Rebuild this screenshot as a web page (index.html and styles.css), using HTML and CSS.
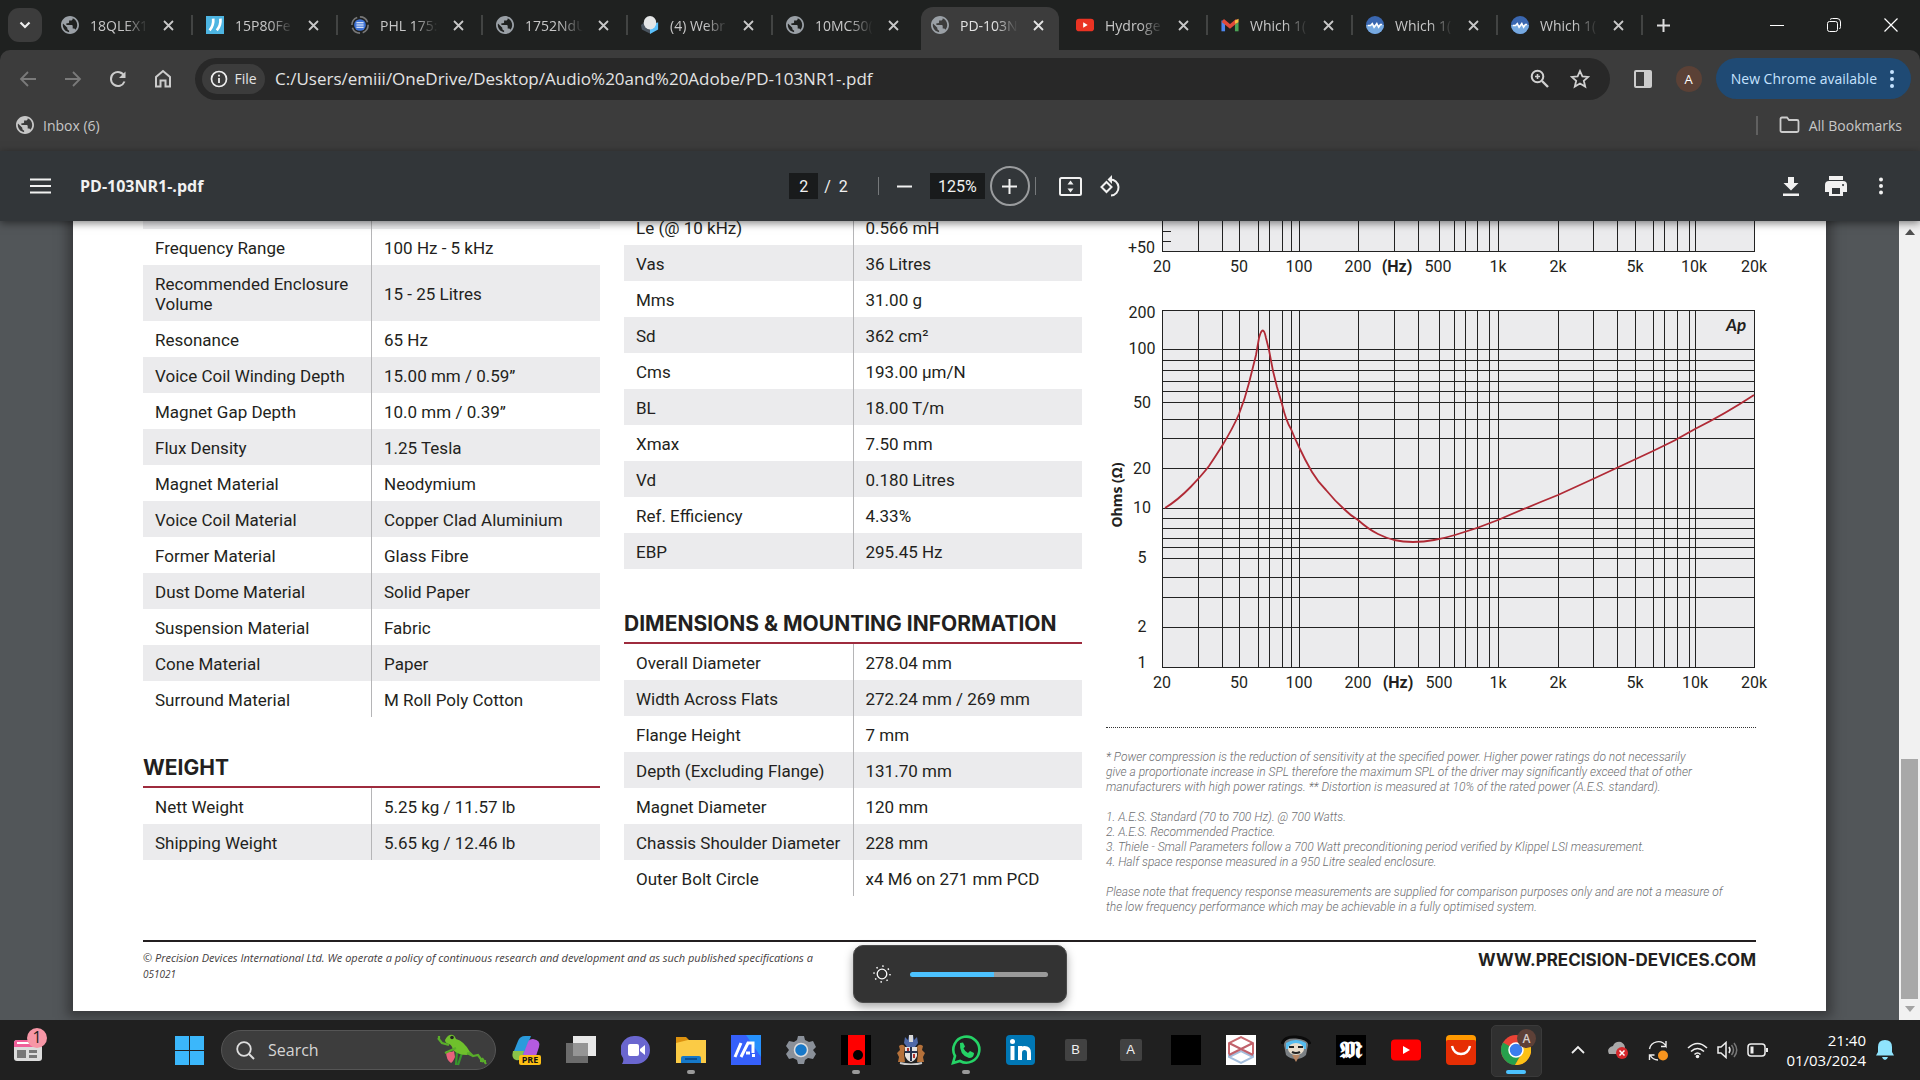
FILE: index.html
```html
<!DOCTYPE html>
<html lang="en">
<head>
<meta charset="utf-8">
<title>PD-103NR1-.pdf</title>
<link rel="stylesheet" href="styles.css">
</head>
<body>
<svg class="sprite" aria-hidden="true">
  <symbol id="globe" viewBox="2 2 20 20"><path d="M12 2C6.480 2 2 6.480 2 12s4.480 10 10 10 10-4.480 10-10S17.520 2 12 2zm-1 17.930c-3.950-.49-7-3.850-7-7.930 0-.62.08-1.210.21-1.790L9 15v1c0 1.100.9 2 2 2v1.930zm6.900-2.540c-.26-.81-1-1.390-1.900-1.390h-1v-3c0-.55-.45-1-1-1H8v-2h2c.55 0 1-.45 1-1V7h2c1.100 0 2-.9 2-2v-.41c2.930 1.190 5 4.060 5 7.410 0 2.080-.8 3.970-2.100 5.390z" fill="currentColor"/></symbol>
  <symbol id="cross" viewBox="0 0 11 11"><path d="M1 1l9 9M10 1l-9 9" stroke="currentColor" stroke-width="1.800" fill="none"/></symbol>
  <symbol id="wave" viewBox="0 0 20 20"><circle cx="10" cy="10" r="10" fill="#3a67b0"/><path d="M0 10a10 10 0 0 0 20 0z" fill="#76a9e0"/><path d="M2 10.500h3l2-2 2 4 3-4 2 4 2-3h2" stroke="#fff" stroke-width="1.800" fill="none"/></symbol>
</svg>

<header class="browser">
  <div class="tabstrip">
    <button class="tab-search" aria-label="Search tabs"><svg width="12" height="8" viewBox="0 0 12 8"><path d="M1.500 1.500 6 6l4.500-4.500" stroke="#eee" stroke-width="2.200" fill="none"/></svg></button>
    <ul class="tabs">
      <li class="tab"><svg class="fav"><use href="#globe"/></svg><span>18QLEX1</span><button aria-label="Close tab"><svg><use href="#cross"/></svg></button></li>
      <li class="tab"><svg class="fav" viewBox="0 0 20 20"><path d="M0 0h20v20H0z" fill="#4db5e2"/><path d="M8 3c.5 5-.5 9-4 13M16 3c.5 5-.5 9-4 13" stroke="#fff" stroke-width="3" fill="none"/></svg><span>15P80Fe</span><button aria-label="Close tab"><svg><use href="#cross"/></svg></button></li>
      <li class="tab"><svg class="fav" viewBox="0 0 20 20"><circle cx="10" cy="10" r="9" stroke="#777" stroke-width="1.800" stroke-dasharray="11 3" fill="none"/><circle cx="10" cy="10" r="6.500" fill="#3f74d8"/><path d="M6 7.500h8M6 10h8M6 12.500h8" stroke="#fff" stroke-width="1.300"/></svg><span>PHL 175:</span><button aria-label="Close tab"><svg><use href="#cross"/></svg></button></li>
      <li class="tab"><svg class="fav"><use href="#globe"/></svg><span>1752NdU</span><button aria-label="Close tab"><svg><use href="#cross"/></svg></button></li>
      <li class="tab"><svg class="fav" viewBox="0 0 20 20"><path d="M0 10 5 6l6 5v9L1 15z" fill="#4a5560"/><path d="m10 11 9-4v8l-9 5z" fill="#5bc0fb"/><ellipse cx="10" cy="7.500" rx="7" ry="7.500" fill="#e4e6e7"/></svg><span>(4) Webr</span><button aria-label="Close tab"><svg><use href="#cross"/></svg></button></li>
      <li class="tab"><svg class="fav"><use href="#globe"/></svg><span>10MC50(</span><button aria-label="Close tab"><svg><use href="#cross"/></svg></button></li>
      <li class="tab active"><svg class="fav"><use href="#globe"/></svg><span>PD-103N</span><button aria-label="Close tab"><svg><use href="#cross"/></svg></button></li>
      <li class="tab"><svg class="fav" viewBox="0 0 20 20"><rect y="3" width="20" height="14" rx="3.500" fill="#ea3323"/><path d="m8 7 5 3-5 3z" fill="#fff"/></svg><span>Hydroge</span><button aria-label="Close tab"><svg><use href="#cross"/></svg></button></li>
      <li class="tab"><svg class="fav" viewBox="0 0 20 20"><path d="M2.500 17V5" stroke="#4d86ee" stroke-width="4"/><path d="M17.500 17V7" stroke="#4ba355" stroke-width="4"/><path d="m2 5 8 6.500L18 5" stroke="#e14a3a" stroke-width="4" fill="none"/><path d="M15.500 8.500V5l4-2v4z" fill="#f4c142"/></svg><span>Which 1(</span><button aria-label="Close tab"><svg><use href="#cross"/></svg></button></li>
      <li class="tab"><svg class="fav"><use href="#wave"/></svg><span>Which 1(</span><button aria-label="Close tab"><svg><use href="#cross"/></svg></button></li>
      <li class="tab"><svg class="fav"><use href="#wave"/></svg><span>Which 1(</span><button aria-label="Close tab"><svg><use href="#cross"/></svg></button></li>
    </ul>
    <button class="new-tab" aria-label="New tab"><svg width="13" height="13" viewBox="0 0 13 13"><path d="M6.500 0v13M0 6.500h13" stroke="#ddd" stroke-width="2"/></svg></button>
    <div class="window-controls">
      <button aria-label="Minimize"><svg width="14" height="14" viewBox="0 0 14 14"><path d="M0 7.500h14" stroke="#fff"/></svg></button>
      <button aria-label="Restore"><svg width="14" height="14" viewBox="0 0 14 14"><rect x=".5" y="3.500" width="10" height="10" rx="2" fill="none" stroke="#fff"/><path d="M3 1.500q1-1 2.500-1H10Q13.500.5 13.500 4v4.500q0 1.500-1 2.500" fill="none" stroke="#fff"/></svg></button>
      <button aria-label="Close"><svg width="14" height="14" viewBox="0 0 14 14"><path d="m.5.5 13 13m0-13-13 13" stroke="#fff" stroke-width="1.200"/></svg></button>
    </div>
  </div>

  <div class="toolbar">
    <div class="nav-buttons">
      <button aria-label="Back" disabled><svg viewBox="0 0 20 20"><path d="M18 10H3M10 3l-7 7 7 7" stroke="#7a7a7a" stroke-width="1.800" fill="none"/></svg></button>
      <button aria-label="Forward" disabled><svg viewBox="0 0 20 20"><path d="M2 10h15M10 3l7 7-7 7" stroke="#7a7a7a" stroke-width="1.800" fill="none"/></svg></button>
      <button aria-label="Reload"><svg viewBox="0 0 20 20"><path d="M16.500 12.500A7 7 0 1 1 16.300 7" stroke="#ccc" stroke-width="2" fill="none"/><path d="M17.500 2.500V9H11z" fill="#ccc"/></svg></button>
      <button aria-label="Home"><svg viewBox="0 0 20 20"><path d="M3 17.500V8l7-6 7 6v9.500h-4.500v-6h-5v6z" stroke="#ccc" stroke-width="2" fill="none"/></svg></button>
    </div>
    <form class="omnibox">
      <button type="button" class="chip"><svg width="18" height="18" viewBox="0 0 18 18"><circle cx="9" cy="9" r="7.500" fill="none" stroke="#eee" stroke-width="1.700"/><path d="M9 8v5M9 4.700v1.900" stroke="#eee" stroke-width="1.800"/></svg>File</button>
      <input class="url" aria-label="Address" value="C:/Users/emiii/OneDrive/Desktop/Audio%20and%20Adobe/PD-103NR1-.pdf">
      <button type="button" aria-label="Zoom"><svg viewBox="0 0 20 20"><circle cx="7.500" cy="7.500" r="5.800" stroke="#d0d0d0" stroke-width="2" fill="none"/><path d="m12 12 6 6" stroke="#d0d0d0" stroke-width="2.400"/><path d="M7.500 5v5M5 7.500h5" stroke="#d0d0d0" stroke-width="1.600"/></svg></button>
      <button type="button" aria-label="Bookmark"><svg viewBox="0 0 20 20"><path d="m10 2 2.400 5.400 5.900.5-4.500 3.900 1.400 5.800-5.200-3.100-5.200 3.100 1.400-5.800L1.700 7.900l5.900-.5z" stroke="#d0d0d0" stroke-width="1.800" fill="none"/></svg></button>
    </form>
    <button class="side-panel" aria-label="Side panel"><svg width="20" height="20" viewBox="0 0 20 20"><path fill-rule="evenodd" d="M3 1h14q2 0 2 2v14q0 2-2 2H3q-2 0-2-2V3q0-2 2-2zm0 2v14h8V3z" fill="#ccc"/></svg></button>
    <button class="avatar">A</button>
    <button class="update">New Chrome available<svg width="6" height="20" viewBox="0 0 6 20"><g fill="#c6e3ff"><circle cx="3" cy="3" r="2"/><circle cx="3" cy="10" r="2"/><circle cx="3" cy="17" r="2"/></g></svg></button>
  </div>

  <nav class="bookmarks">
    <a href="#inbox"><svg width="18" height="18"><use href="#globe"/></svg>Inbox (6)</a>
    <a class="all" href="#bookmarks"><svg width="21" height="18" viewBox="0 0 21 18"><path d="M1.500 3q0-1.500 1.500-1.500h5L10 4h8q1.500 0 1.500 1.500v9q0 1.500-1.500 1.500H3q-1.500 0-1.500-1.500z" stroke="#ccc" stroke-width="1.800" fill="none"/></svg>All Bookmarks</a>
  </nav>
</header>

<div class="pdfbar">
  <div class="pdf-left">
    <button aria-label="Menu"><svg width="21" height="16" viewBox="0 0 21 16"><path d="M0 1.500h21M0 8h21M0 14.500h21" stroke="#f1f1f1" stroke-width="2.200"/></svg></button>
    <h1>PD-103NR1-.pdf</h1>
  </div>
  <div class="pdf-mid">
    <input class="page-no" aria-label="Page number" value="2"><span class="total">/&nbsp; 2</span>
    <i class="rule"></i>
    <button aria-label="Zoom out"><svg width="15" height="15" viewBox="0 0 15 15"><path d="M0 7.500h15" stroke="#f1f1f1" stroke-width="2"/></svg></button>
    <input class="zoom" aria-label="Zoom level" value="125%">
    <button class="ring" aria-label="Zoom in"><svg width="15" height="15" viewBox="0 0 15 15"><path d="M0 7.500h15M7.500 0v15" stroke="#f1f1f1" stroke-width="2"/></svg></button>
    <i class="rule short"></i>
    <button class="fit" aria-label="Fit to page"><svg width="23" height="19" viewBox="0 0 23 19"><rect x="1" y="1" width="21" height="17" rx="1.500" stroke="#f1f1f1" stroke-width="2" fill="none"/><path d="m11.500 3.500 3 4h-6zM11.500 15.500l3-4h-6z" fill="#f1f1f1"/></svg></button>
    <button class="rotate" aria-label="Rotate"><svg width="23" height="23" viewBox="0 0 23 23"><path d="m7.500 7 5 5-5 5-5-5z" stroke="#f1f1f1" stroke-width="2" fill="none"/><path d="M11 4.500a7.800 7.800 0 1 1 1 16" stroke="#f1f1f1" stroke-width="2" fill="none"/><path d="M13 0v9L8.500 4.500z" fill="#f1f1f1"/></svg></button>
  </div>
  <div class="pdf-right">
    <button aria-label="Download"><svg width="16" height="19" viewBox="0 0 16 19"><path d="M5 0h6v6h4.500L8 13.500.5 6H5zM0 16.500h16V19H0z" fill="#f1f1f1"/></svg></button>
    <button aria-label="Print"><svg width="22" height="20" viewBox="0 0 22 20"><path fill-rule="evenodd" d="M4 0h14v4H4zM4 5h14q4 0 4 4v7h-4v4H4v-4H0V9q0-4 4-4zm3 7v6h8v-6zm11-4a1 1 0 1 0 .1 0z" fill="#f1f1f1"/></svg></button>
    <button aria-label="More"><svg width="6" height="18" viewBox="0 0 6 18"><g fill="#f1f1f1"><circle cx="3" cy="2.500" r="2"/><circle cx="3" cy="9" r="2"/><circle cx="3" cy="15.500" r="2"/></g></svg></button>
  </div>
</div>

<main class="viewer">
  <div class="scroll-area">
    <article class="page">
      <div class="columns">
        <section>
          <table class="spec general">
            <tr class="cut"><th></th><td></td></tr>
            <tr><th>Frequency Range</th><td>100 Hz - 5 kHz</td></tr>
            <tr class="tall"><th>Recommended Enclosure Volume</th><td>15 - 25 Litres</td></tr>
            <tr><th>Resonance</th><td>65 Hz</td></tr>
            <tr><th>Voice Coil Winding Depth</th><td>15.00 mm / 0.59”</td></tr>
            <tr><th>Magnet Gap Depth</th><td>10.0 mm / 0.39”</td></tr>
            <tr><th>Flux Density</th><td>1.25 Tesla</td></tr>
            <tr><th>Magnet Material</th><td>Neodymium</td></tr>
            <tr><th>Voice Coil Material</th><td>Copper Clad Aluminium</td></tr>
            <tr><th>Former Material</th><td>Glass Fibre</td></tr>
            <tr><th>Dust Dome Material</th><td>Solid Paper</td></tr>
            <tr><th>Suspension Material</th><td>Fabric</td></tr>
            <tr><th>Cone Material</th><td>Paper</td></tr>
            <tr><th>Surround Material</th><td>M Roll Poly Cotton</td></tr>
          </table>
          <h2>WEIGHT</h2>
          <table class="spec titled">
            <tr><th>Nett Weight</th><td>5.25 kg / 11.57 lb</td></tr>
            <tr><th>Shipping Weight</th><td>5.65 kg / 12.46 lb</td></tr>
          </table>
        </section>
        <section>
          <table class="spec titled">
            <tr><th>Le (@ 10 kHz)</th><td>0.566 mH</td></tr>
            <tr><th>Vas</th><td>36 Litres</td></tr>
            <tr><th>Mms</th><td>31.00 g</td></tr>
            <tr><th>Sd</th><td>362 cm²</td></tr>
            <tr><th>Cms</th><td>193.00 µm/N</td></tr>
            <tr><th>BL</th><td>18.00 T/m</td></tr>
            <tr><th>Xmax</th><td>7.50 mm</td></tr>
            <tr><th>Vd</th><td>0.180 Litres</td></tr>
            <tr><th>Ref. Efficiency</th><td>4.33%</td></tr>
            <tr><th>EBP</th><td>295.45 Hz</td></tr>
          </table>
          <h2 class="after-parameters">DIMENSIONS &amp; MOUNTING INFORMATION</h2>
          <table class="spec titled">
            <tr><th>Overall Diameter</th><td>278.04 mm</td></tr>
            <tr><th>Width Across Flats</th><td>272.24 mm / 269 mm</td></tr>
            <tr><th>Flange Height</th><td>7 mm</td></tr>
            <tr><th>Depth (Excluding Flange)</th><td>131.70 mm</td></tr>
            <tr><th>Magnet Diameter</th><td>120 mm</td></tr>
            <tr><th>Chassis Shoulder Diameter</th><td>228 mm</td></tr>
            <tr><th>Outer Bolt Circle</th><td>x4 M6 on 271 mm PCD</td></tr>
          </table>
        </section>
        <section>
          <svg class="chart" viewBox="0 0 650 490">
            <path d="M56 0h592v42H56zM56 101h592v357H56z" fill="#ebebed"/>
            <g stroke="#222" fill="none" shape-rendering="crispEdges">
              <path d="M92.500 101V458M116.500 101V458M133.500 101V458M152.500 101V458M163.500 101V458M176.500 101V458M185.500 101V458M193.500 101V458M252.500 101V458M288.500 101V458M312.500 101V458M333.500 101V458M348.500 101V458M359.500 101V458M371.500 101V458M383.500 101V458M392.500 101V458M452.500 101V458M487.500 101V458M511.500 101V458M529.500 101V458M547.500 101V458M558.500 101V458M571.500 101V458M583.500 101V458M589.500 101V458"/>
              <path d="M92.500 0V42M116.500 0V42M133.500 0V42M152.500 0V42M163.500 0V42M176.500 0V42M185.500 0V42M193.500 0V42M252.500 0V42M288.500 0V42M312.500 0V42M333.500 0V42M348.500 0V42M359.500 0V42M371.500 0V42M383.500 0V42M392.500 0V42M452.500 0V42M487.500 0V42M511.500 0V42M529.500 0V42M547.500 0V42M558.500 0V42M571.500 0V42M583.500 0V42M589.500 0V42M56.500 22.500h8M56.500 32.500h8"/>
              <path d="M56 140.500h592M56 151.500h592M56 161.500h592M56 172.500h592M56 182.500h592M56 193.500h592M56 210.500h592M56 229.500h592M56 259.500h592M56 299.500h592M56 309.500h592M56 319.500h592M56 329.500h592M56 338.500h592M56 349.500h592M56 368.500h592M56 388.500h592M56 418.500h592"/>
              <path d="M56.500 0V42.500H648.500V0M56.500 101.500H648.500V458.500H56.500z"/>
            </g>
            <path d="M59 299Q72 291 84.600 278 97 265 103 257 111 245 116 237 127 219 133 205 139 190 143 174L150 146 153 129Q157 114 160 129L163 141 167 162 171 178 176 195Q180 212 185 220 189 230 193 238 199 251 206 263 212 273 220 281 229 292 238 300 245 307 252 311 262 320 272 325 280 329 288 331 297 333 307 333 318 333 328 331 339 329 349 326 370 320 392 311 422 298 452 286L487 270 547 242Q569 232 589 220 619 205 648 186" stroke="#b02a36" stroke-width="1.800" fill="none"/>
            <g class="axis">
              <text x="22" y="44" class="start">+50</text>
              <text x="56" y="63">20</text><text x="133" y="63">50</text><text x="193" y="63">100</text><text x="252" y="63">200</text><text x="291" y="63" class="b">(Hz)</text><text x="332" y="63">500</text><text x="392" y="63">1k</text><text x="452" y="63">2k</text><text x="529" y="63">5k</text><text x="588" y="63">10k</text><text x="648" y="63">20k</text>
              <text x="56" y="479">20</text><text x="133" y="479">50</text><text x="193" y="479">100</text><text x="252" y="479">200</text><text x="292" y="479" class="b">(Hz)</text><text x="333" y="479">500</text><text x="392" y="479">1k</text><text x="452" y="479">2k</text><text x="529" y="479">5k</text><text x="589" y="479">10k</text><text x="648" y="479">20k</text>
              <text x="36" y="109">200</text><text x="36" y="145">100</text><text x="36" y="199">50</text><text x="36" y="265">20</text><text x="36" y="304">10</text><text x="36" y="354">5</text><text x="36" y="423">2</text><text x="36" y="459">1</text>
              <text transform="rotate(-90 16 286)" x="16" y="286" class="ohms">Ohms (Ω)</text>
              <text x="630" y="122" class="ap">Ap</text>
            </g>
          </svg>
          <div class="notes">
            <p>* Power compression is the reduction of sensitivity at the specified power. Higher power ratings do not necessarily<br>give a proportionate increase in SPL therefore the maximum SPL of the driver may significantly exceed that of other<br>manufacturers with high power ratings. ** Distortion is measured at 10% of the rated power (A.E.S. standard).</p>
            <p>1. A.E.S. Standard (70 to 700 Hz). @ 700 Watts.<br>2. A.E.S. Recommended Practice.<br>3. Thiele - Small Parameters follow a 700 Watt preconditioning period verified by Klippel LSI measurement.<br>4. Half space response measured in a 950 Litre sealed enclosure.</p>
            <p>Please note that frequency response measurements are supplied for comparison purposes only and are not a measure of<br>the low frequency performance which may be achievable in a fully optimised system.</p>
          </div>
        </section>
      </div>
      <footer class="imprint">
        <p>© Precision Devices International Ltd. We operate a policy of continuous research and development and as such published specifications a<small>051021</small></p>
        <a href="#site">WWW.PRECISION-DEVICES.COM</a>
      </footer>
    </article>
  </div>
  <div class="scrollbar"><i class="up"></i><i class="thumb"></i><i class="down"></i></div>
  <label class="brightness"><svg width="18" height="18" viewBox="0 0 18 18"><circle cx="9" cy="9" r="4.800" stroke="#fff" stroke-width="1.300" fill="none"/><circle cx="9" cy="9" r="8" stroke="#fff" stroke-width="1.500" stroke-dasharray="1.500 4.780" fill="none"/></svg><input type="range" aria-label="Brightness" min="0" max="100" value="61"></label>
</main>

<footer class="taskbar">
  <div class="widgets"><button aria-label="Widgets"><svg width="34" height="36" viewBox="0 0 34 36"><rect y="13" width="28" height="21" rx="3" fill="#dcdcdc"/><path d="M0 20v-4q0-3 3-3h25v7z" fill="#f0609a"/><path d="M3 16h12" stroke="#fff" stroke-width="2"/><path d="M3 23h9v8H3zM15 23h8v3h-8zM15 28h8v3h-8z" fill="#777"/><circle cx="23" cy="11" r="10" fill="#f796a6"/><text x="23" y="16" class="badge">1</text></svg></button></div>
  <button class="app" aria-label="Start"><svg width="29" height="29" viewBox="0 0 29 29"><path d="M0 0h14v14H0zM15 0h14v14H15zM0 15h14v14H0zM15 15h14v14H15z" fill="#3bb7fb"/></svg></button>
  <label class="search"><svg width="19" height="19" viewBox="0 0 19 19"><circle cx="8" cy="8" r="6.800" stroke="#ddd" stroke-width="1.800" fill="none"/><path d="m13 13 5 5" stroke="#ddd" stroke-width="2"/></svg><input placeholder="Search" aria-label="Search"><svg width="52" height="32" viewBox="0 0 52 32"><path d="M20 31l1-14M22 31l4-12" stroke="#37962d" stroke-width="2.200" fill="none"/><path d="M10 17q4 2 8 0l1 6q-2 5-4 6-5-3-5-12z" fill="#e8627c"/><path d="M9 6q3-6 8-5 2 1 3 4 8 2 14 13l-3 3q-9 0-14-5-1-5-4-6-4-1-4-4z" fill="#6fc02c"/><path d="M13 11 6 9 2 4M3 2v4M20 14l-11 5M33 18l4 4 5-1 5 7M31 19l6 3M44 27h6M46 24l4 6" stroke="#59ad2a" stroke-width="2.200" fill="none"/><circle cx="16" cy="3.500" r="1.800" fill="#222"/></svg></label>
  <nav class="apps">
    <button class="app" aria-label="Copilot"><svg viewBox="0 0 30 30"><path d="M3 16 7 6q2-5 7-5h6l-7 18q-2 5-7 4-5-1-3-7z" fill="#2b9bdc"/><path d="M2 16h11l-2 6q-2 4-6 3-5-1-3-9z" fill="#8bc34a"/><path d="M12 20 17 7q1-3 5-3 8 1 6 8l-3 9z" fill="#b45be0"/><rect x="8" y="20" width="22" height="10" rx="2" fill="#fdbf15"/><text x="19" y="28" class="pre">PRE</text></svg></button>
    <button class="app" aria-label="Task view"><svg viewBox="0 0 30 30"><path d="M7 1h23v20H7z" fill="#e8e8e8"/><path d="M0 8h22v20H0z" fill="#808080" opacity=".8"/></svg></button>
    <button class="app" aria-label="Chat"><svg viewBox="0 0 30 30"><path d="M15 1a14 14 0 0 1 0 28H1q2-3 1-6A14 14 0 0 1 15 1z" fill="#6a66cf"/><rect x="7" y="9" width="11" height="12" rx="2" fill="#fff"/><path d="m19 14 5-4v10l-5-4z" fill="#fff"/></svg></button>
    <button class="app run" aria-label="File Explorer"><svg viewBox="0 0 30 30"><path d="M0 2h10l3 3v6H0z" fill="#dd920f"/><path d="M0 8l12-3h18v23H0z" fill="#fbcb45"/><path d="M5 28v-5q0-2 2-2h16q2 0 2 2v5z" fill="#1679c9"/><path d="M9 24h12" stroke="#0b4f91" stroke-width="2"/></svg></button>
    <button class="app" aria-label="MyASUS"><svg viewBox="0 0 30 30"><path d="M0 0h30v30H0z" fill="#3660fa"/><path d="M15 0h15v22z" fill="#2691fd"/><path d="M4 22 10 8M10 22l7-14h5v10M15 18h4M22.500 19v3" stroke="#fff" stroke-width="3" fill="none"/></svg></button>
    <button class="app" aria-label="Settings"><svg viewBox="0 0 30 30"><path d="m12 1h6l1 4 4 2 4-1 3 6-3 3 3 4-3 5-5-1-3 2-1 4h-6l-1-4-4-2-4 1-3-5 3-4-3-4 3-5 5 1 3-2z" fill="#8a9099"/><circle cx="15" cy="15" r="6.500" fill="#1778c9" stroke="#ddd" stroke-width="1.500"/></svg></button>
    <button class="app run" aria-label="Red card"><svg viewBox="0 0 30 30"><path d="M0 0h30v30H0z"/><path d="M7 0h17v30H7z" fill="#f00"/><circle cx="17" cy="20" r="5"/></svg></button>
    <button class="app" aria-label="Crest"><svg viewBox="0 0 30 30"><path d="M9 2l3 3 1-5h4l1 5 3-3 1 6-3 4h-8l-3-4z" fill="#4f69a8"/><path d="M13 0h4v7h-4z" fill="#d9d9d9"/><path d="M3 11q4-3 6 1l-1 7 1 8H2l1-5-2-4 3-3zM27 11q-4-3-6 1l1 7-1 8h7l-1-5 2-4-3-3z" fill="#b5713a"/><path d="M9 12h12v9q-2 5-6 6-4-1-6-6z" fill="#e5e2df"/><path d="M15 12v14M9 17h12" stroke="#26324d" stroke-width="2"/><path d="M12 13v3M18 19v4" stroke="#b0322c" stroke-width="2"/><path d="M4 28q11 3 22 0" stroke="#ccc" stroke-width="2" fill="none"/></svg></button>
    <button class="app run" aria-label="WhatsApp"><svg viewBox="0 0 30 30"><path d="m2 28 2-7a13 13 0 1 1 5 5z" fill="none" stroke="#25d366" stroke-width="2.600"/><path d="M9 8l3-.5 2 4-1.500 2q1.500 3 4.500 4.500l2-2 4 2q0 5-5 5Q8 20 9 8z" fill="#25d366"/></svg></button>
    <button class="app" aria-label="LinkedIn"><svg viewBox="0 0 30 30"><rect width="29" height="30" rx="4" fill="#0077b5"/><path d="M6.500 11v14M14 25V11M14 18q0-5 4.500-5t4.500 5v7" stroke="#fff" stroke-width="4" fill="none"/><circle cx="6.500" cy="6.500" r="2.500" fill="#fff"/></svg></button>
    <button class="app letter"><span>B</span></button>
    <button class="app letter"><span>A</span></button>
    <button class="app" aria-label="Black tile"><svg viewBox="0 0 30 30"><path d="M0 0h30v30H0z"/></svg></button>
    <button class="app" aria-label="Hexagon"><svg viewBox="0 0 30 30"><path d="M0 0h30v30H0z" fill="#fff"/><path d="M3 19V8l12-6 12 6v11" stroke="#c96a70" stroke-width="2" fill="none"/><path d="M3 19v3l12 6 12-6v-3M3 22l12-6 12 6" stroke="#a3bddc" stroke-width="2" fill="none"/><path d="m3 8 24 12M27 8 3 20" stroke="#c0606a" stroke-width="2" fill="none"/></svg></button>
    <button class="app" aria-label="Face"><svg viewBox="0 0 30 30"><path d="M3 10q0-8 12-8t12 8l-2 10q-4 4-10 4T5 20z" fill="#7b8084"/><path d="M5 8q10-6 20 0v6H5z" fill="#56bdf1"/><ellipse cx="15" cy="14" rx="8" ry="6" fill="#e8ddcc"/><path d="M8 12h5M17 12h5M11 17q4 2 8 0" stroke="#222" stroke-width="2.200" fill="none"/><path d="M11 20h8l-4 7z" fill="#b68563"/><path d="M1 9Q3 1 15 2t14 7" stroke="#0b0b0b" stroke-width="3" fill="none"/></svg></button>
    <button class="app" aria-label="Masthead"><svg viewBox="0 0 30 30"><path d="M0 0h30v30H0z"/><text x="15" y="23" class="goth">𝕸</text></svg></button>
    <button class="app" aria-label="YouTube"><svg viewBox="0 0 30 30"><rect y="4.500" width="30" height="21" rx="4" fill="#f00"/><path d="m12 11 7 4-7 4z" fill="#fff"/></svg></button>
    <button class="app" aria-label="AliExpress"><svg viewBox="0 0 30 30"><rect width="30" height="20" rx="4" fill="#f90"/><path d="M0 7q0-2 2-2h26q2 0 2 2v19q0 4-4 4H4q-4 0-4-4z" fill="#e62e04"/><path d="M6 11q2 8 9 8t9-8" stroke="#fff" stroke-width="2.500" fill="none"/></svg></button>
    <button class="app current" aria-label="Chrome"><svg viewBox="0 0 30 30"><circle cx="15" cy="15" r="15" fill="#ea4335"/><path d="M2 7.500A15 15 0 0 0 14 30l7-12z" fill="#26a04c"/><path d="M28 7.500A15 15 0 0 1 14 30l7-12-6-10z" fill="#fbc116"/><circle cx="15" cy="15" r="7" fill="#3b7ded" stroke="#fff" stroke-width="1.500"/></svg><b>A</b></button>
  </nav>
  <div class="tray">
    <button aria-label="Show hidden icons"><svg width="14" height="10" viewBox="0 0 14 10"><path d="m1 8 6-6 6 6" stroke="#eee" stroke-width="1.800" fill="none"/></svg></button>
    <button aria-label="OneDrive"><svg width="22" height="20" viewBox="0 0 22 20"><path d="M2 14q-3-6 4-8 2-5 8-4 4 2 4 6l-4 6z" fill="#a8a8a8"/><circle cx="15" cy="13" r="6" fill="#d6282c"/><path d="m12.500 10.500 5 5m0-5-5 5" stroke="#fff" stroke-width="1.500"/></svg></button>
    <button aria-label="Sync"><svg width="21" height="21" viewBox="0 0 21 21"><path d="M1.500 9A9 9 0 0 1 18 6V1M18 6.500h-5M1.500 20v-5h5M2 15q3 5 8 5" stroke="#eee" stroke-width="1.400" fill="none"/><circle cx="15" cy="15.500" r="5" fill="#f7941e"/></svg></button>
    <button class="status" aria-label="Network, volume and battery">
      <svg width="21" height="18" viewBox="0 0 21 18"><path d="M1 7q9.500-9 19 0M4 10.500q6.500-6 13 0M7.500 13.500q3-3 6 0" stroke="#eee" stroke-width="1.600" fill="none"/><circle cx="10.500" cy="15.500" r="1.800" fill="#eee"/></svg>
      <svg width="21" height="18" viewBox="0 0 21 18"><path d="M1 6h3l5-4.500v15L4 12H1z" stroke="#eee" stroke-width="1.500" fill="none"/><path d="M12 6q2 3 0 6" stroke="#eee" stroke-width="1.500" fill="none"/><path d="M14.500 4q4 5 0 10M17 2q5.500 7 0 14" stroke="#777" stroke-width="1.500" fill="none"/></svg>
      <svg width="21" height="18" viewBox="0 0 21 18"><rect x="1" y="3" width="17" height="12" rx="3" stroke="#eee" stroke-width="1.500" fill="none"/><path d="M3.500 5.500h3v7h-3zM19 7h2v4h-2z" fill="#eee"/></svg>
    </button>
    <time>21:40<br>01/03/2024</time>
    <button class="bell" aria-label="Notifications"><svg width="18" height="20" viewBox="0 0 18 20"><path d="M9 0q7 0 7 7v5l2 3.500H0L2 12V7q0-7 7-7zM6 17h6q-1 3-3 3t-3-3z" fill="#8fe3fd"/></svg></button>
  </div>
</footer>
</body>
</html>
```
FILE: styles.css
```css
* { box-sizing: border-box; }
body { margin: 0; height: 100vh; display: flex; flex-direction: column; overflow: hidden; background: #525659; font-family: "Open Sans", sans-serif; color: #e3e3e3; }
button { border: 0; padding: 0; margin: 0; background: none; color: inherit; font: inherit; display: flex; align-items: center; justify-content: center; flex: none; }
input { border: 0; padding: 0; margin: 0; background: none; color: inherit; font: inherit; min-width: 0; }
a { color: inherit; text-decoration: none; }
svg { display: block; flex: none; }
.sprite { position: absolute; width: 0; height: 0; }

/* browser chrome */
.browser { background: #1f2120; flex: none; }
.tabstrip { height: 50px; display: flex; align-items: center; }
.tab-search { width: 34px; height: 34px; margin: 0 5px 0 8px; border-radius: 11px; background: #3c3c3c; }
.tabs { display: flex; align-self: stretch; list-style: none; margin: 0; padding: 0; }
.tab { flex: 0 1 145px; width: 145px; display: flex; align-items: center; padding-left: 14px; position: relative; font-size: 14px; color: #c7c7c7; }
.tab::after { content: ""; position: absolute; right: -1px; top: 15px; width: 2px; height: 20px; background: #424443; }
.tab.active::after, .tab:has(+ .active)::after { display: none; }
.tab .fav { width: 18px; height: 18px; color: #9aa0a6; position: relative; }
.tab span { width: 58px; margin: 0 15px 0 11px; overflow: hidden; white-space: nowrap; mask-image: linear-gradient(90deg, #000 60%, transparent); }
.tab button svg { width: 11px; height: 11px; }
.tab.active { color: #e3e3e3; }
.tab.active::before { content: ""; position: absolute; left: 4px; right: 3px; top: 7px; bottom: 0; border-radius: 12px 12px 0 0; background: #3c3c3c; }
.tab.active span, .tab.active button { position: relative; }
.new-tab { width: 36px; height: 34px; margin-left: 3px; }
.window-controls { display: flex; margin-left: auto; padding-right: 1px; }
.window-controls button { width: 57px; height: 40px; }

.toolbar { height: 57px; display: flex; align-items: center; background: #3c3c3c; border-radius: 10px 10px 0 0; padding: 0 9px 0 5px; }
.nav-buttons { display: flex; width: 190px; }
.nav-buttons button { width: 45px; height: 34px; }
.nav-buttons svg, .omnibox > button:not(.chip) svg { width: 20px; height: 20px; }
.omnibox { flex: 1; height: 42px; display: flex; align-items: center; border-radius: 21px; background: #282828; padding: 0 10px 0 7px; }
.omnibox > button:not(.chip) { width: 40px; height: 32px; }
.chip { width: 63px; height: 30px; gap: 6px; border-radius: 15px; background: #3c3c3c; font-size: 14px; font-weight: 500; }
.url { flex: 1; margin-left: 10px; font-size: 17px; }
.side-panel { width: 32px; height: 32px; margin-left: 17px; }
.avatar { width: 26px; height: 26px; margin: 0 14px 0 17px; border-radius: 50%; background: #5b4136; color: #fff; font-size: 13px; }
.update { height: 41px; padding: 0 16px 0 15px; gap: 12px; border-radius: 21px; background: #1f4a74; color: #c6e3ff; font-size: 14px; font-weight: 500; }
.bookmarks { height: 44px; padding: 0 18px 8px 16px; background: #3c3c3c; display: flex; align-items: center; justify-content: space-between; font-size: 14px; color: #c7c7c7; }
.bookmarks a { display: flex; align-items: center; gap: 9px; }
.bookmarks .all { border-left: 2px solid #606060; padding-left: 21px; }

/* PDF toolbar */
.pdfbar { height: 70px; flex: none; display: grid; grid-template-columns: 1fr auto 1fr; align-items: center; background: #323639; color: #f1f1f1; font-family: Roboto, sans-serif; font-size: 16px; position: relative; z-index: 1; box-shadow: 0 2px 8px rgba(0, 0, 0, .5); }
.pdf-left, .pdf-mid, .pdf-right { display: flex; align-items: center; }
.pdf-left { padding-left: 30px; gap: 29px; }
.pdf-left h1 { margin: 0; font: 700 16px "Open Sans", sans-serif; }
.pdf-right { justify-content: flex-end; padding-right: 17px; }
.pdf-right button { width: 45px; height: 40px; }
.pdf-mid { padding-right: 9px; }
.pdf-mid input { height: 26px; background: #191b1c; text-align: center; }
.pdf-mid .page-no { width: 29px; }
.total { margin: 0 30px 0 6px; }
.rule { width: 1px; height: 18px; margin-right: 18px; background: #76797b; }
.pdf-mid .zoom { width: 55px; margin-left: 18px; }
.ring { width: 40px; height: 40px; margin-left: 5px; border: 2px solid #9a9c9e; border-radius: 50%; }
.rule.short { margin: 0 23px 0 5px; }
.rotate { margin-left: 17px; }

/* document */
.viewer { flex: 1; min-height: 0; display: flex; position: relative; }
.scroll-area { flex: 1; min-width: 0; display: flex; flex-direction: column; justify-content: flex-end; overflow: hidden; padding: 0 73px 9px; }
.page { flex: none; background: #fff; color: #231f20; padding: 0 70px; box-shadow: 0 0 10px 6px rgba(40, 40, 42, .6); font-family: Roboto, sans-serif; }
.columns { display: grid; grid-template-columns: 457fr 458fr 650fr; gap: 24px; padding-bottom: 25px; border-bottom: 2px solid #231f20; }
.spec { width: 100%; border-collapse: collapse; table-layout: fixed; font-size: 17px; line-height: 20px; }
.spec tr { height: 36px; }
.spec .cut { height: 20px; }
.spec .tall { height: 56px; }
.spec th, .spec td { padding: 2px 12px 0; text-align: left; font-weight: 400; }
.spec th { width: calc(50% + 2px); border-right: 1px solid #b5b5b7; }
.spec tr:nth-child(odd) { background: #ebebed; }
.spec.titled tr:nth-child(odd) { background: none; }
.spec.titled tr:nth-child(even) { background: #ebebed; }
.page h2 { margin: 33px 0 0; height: 38px; font: 700 21px/36px Inter, sans-serif; border-bottom: 2px solid #9e2b3d; white-space: nowrap; }
.page .after-parameters { margin-top: 37px; }
.chart { width: 100%; height: auto; overflow: visible; }
.axis { font: 16px "Liberation Sans Narrow", Roboto, sans-serif; fill: #231f20; text-anchor: middle; }
.axis .start { text-anchor: start; }
.axis .b { font-weight: 700; }
.axis .ohms { font: 700 14px "Open Sans", sans-serif; }
.axis .ap { font: italic 700 17px Lato, sans-serif; }
.notes { margin-top: 28px; border-top: 1px dotted #333; padding-top: 22px; font-size: 12px; line-height: 15px; font-style: italic; font-weight: 300; color: #6d6e71; white-space: nowrap; }
.notes p { margin: 0 0 15px; }
.notes p:last-child { margin: 0; }
.imprint { display: flex; justify-content: space-between; padding: 8px 0 29px; font: 17px/16px Inter, sans-serif; }
.imprint p { margin: 0; font: italic 11px/16px "Open Sans", sans-serif; color: #3f3b3c; }
.imprint small { display: block; font-size: 10px; }
.imprint a { font-weight: 700; line-height: 20px; }

.scrollbar { width: 21px; background: #f1f1f1; display: flex; flex-direction: column; align-items: center; padding: 8px 0; }
.scrollbar .up { border: 5px solid transparent; border-top: 0; border-bottom: 6px solid #505050; }
.scrollbar .thumb { width: 17px; height: 240px; margin: auto 0 7px; background: #a8a8a8; }
.scrollbar .down { border: 5px solid transparent; border-bottom: 0; border-top: 6px solid #a3a3a3; }

.brightness { position: absolute; left: 853px; bottom: 17px; width: 214px; height: 58px; display: flex; align-items: center; padding: 0 18px 0 19px; gap: 19px; border-radius: 10px; background: #333; border: 1px solid #4a4a4a; box-shadow: 0 4px 10px rgba(0, 0, 0, .35); }
.brightness input { appearance: none; flex: 1; height: 5px; border-radius: 3px; background: linear-gradient(90deg, #4cc2ff 61%, #9a9a9a 61%); }
.brightness input::-webkit-slider-thumb { appearance: none; width: 1px; height: 5px; }

/* taskbar */
.taskbar { height: 60px; flex: none; display: flex; align-items: center; background: #202020; color: #fff; }
.widgets { width: 162px; padding: 0 0 10px 14px; }
.badge { font: 16px "Open Sans", sans-serif; fill: #222; text-anchor: middle; }
.app { width: 55px; height: 50px; position: relative; }
.apps { display: flex; }
.apps .app svg { width: 30px; height: 30px; }
.search { width: 275px; height: 40px; margin: 0 2px 0 4px; padding: 0 7px 0 14px; display: flex; align-items: center; gap: 13px; border-radius: 20px; border: 1px solid #555; background: #3d3d3d; }
.search input { flex: 1; font-size: 16px; }
.search input::placeholder { color: #d5d5d5; }
.run::after, .current::after { content: ""; position: absolute; bottom: 1px; width: 8px; height: 4px; border-radius: 2px; background: #9a9a9a; }
.current::before { content: ""; position: absolute; left: 3px; top: 0; width: 49px; height: 50px; border-radius: 5px; background: #303030; border: 1px solid #3a3a3a; }
.current svg { position: relative; }
.current::after { width: 20px; background: #4cc2ff; }
.current b { position: absolute; left: 29px; top: 4px; width: 19px; height: 19px; border-radius: 50%; background: #5d4037; color: #d6cec9; font: 600 12px/19px "Open Sans", sans-serif; }
.letter span { width: 22px; height: 22px; border-radius: 2px; background: #424242; color: #f0f0f0; font: 13px/22px "Liberation Sans", sans-serif; }
.pre { font: 700 9px "Open Sans", sans-serif; fill: #111; text-anchor: middle; }
.goth { font: 700 24px "DejaVu Serif", "DejaVu Sans", serif; fill: #fff; text-anchor: middle; }
.tray { display: flex; align-items: center; margin-left: auto; padding-right: 23px; }
.tray > button { width: 40px; height: 40px; }
.tray .status { width: 99px; gap: 9px; }
.tray time { width: 89px; font-size: 15px; line-height: 20px; text-align: right; white-space: nowrap; }
.tray .bell { width: 24px; margin-left: 7px; }
```
